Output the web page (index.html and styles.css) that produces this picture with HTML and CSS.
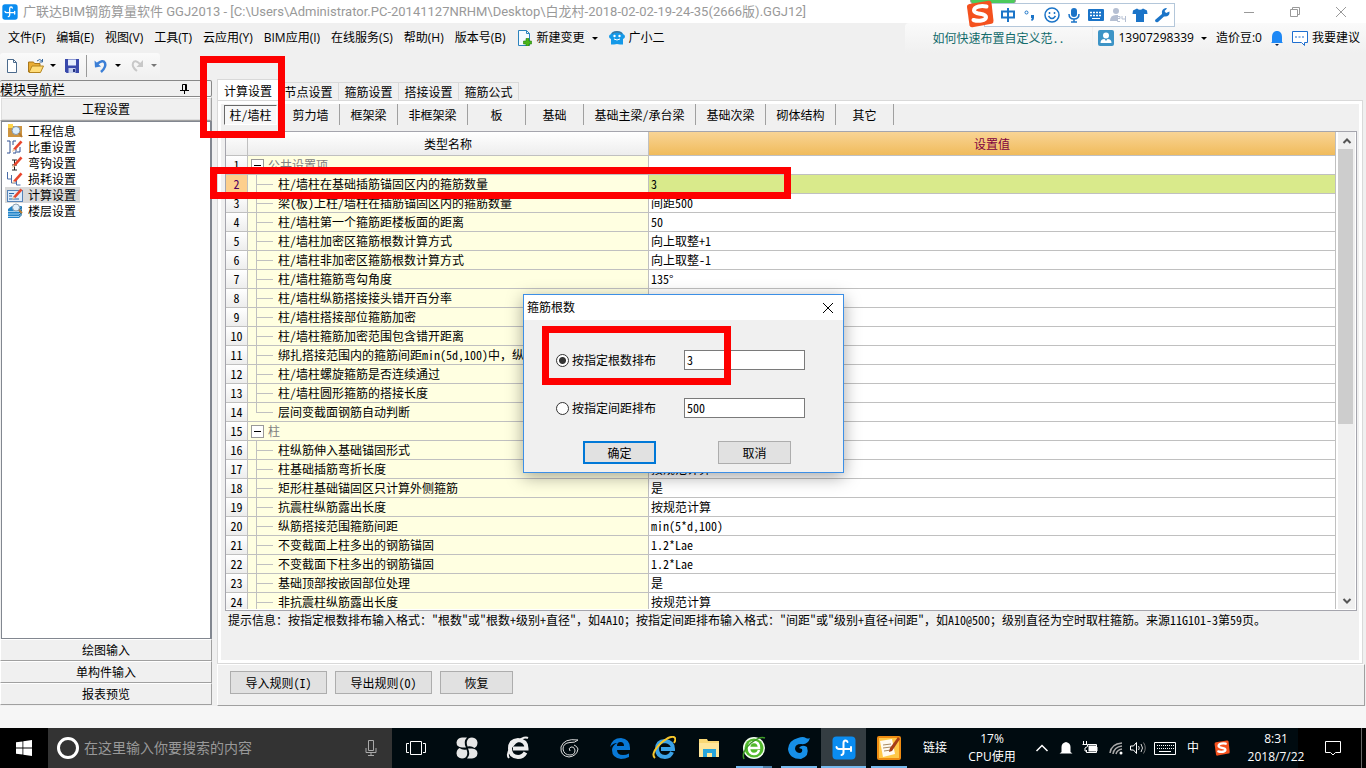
FILE: index.html
```html
<!DOCTYPE html>
<html lang="zh-CN">
<head>
<meta charset="utf-8">
<title>广联达BIM钢筋算量软件 GGJ2013</title>
<link rel="stylesheet" href="styles.css">
</head>
<body>
<svg class="defs" aria-hidden="true">
  <symbol id="i-app" viewBox="0 0 24 24"><rect x=".5" y=".5" width="23" height="23" rx="4" fill="#0a8cf0"/><path d="M15.500 6Q15 4.500 13.500 4.500 11.500 4.500 11.500 7V16.500q0 2-2 2.500M4.500 11q.5 2 2.500 2H19M19 11v4" fill="none" stroke="#fff" stroke-width="2" stroke-linecap="round"/></symbol>
  <symbol id="i-sogou" viewBox="0 0 28 28"><path d="M3.500 4 22.500.8q2.500-.3 3 2l2 18q.2 2.500-2 3L6.500 27.300q-2.500.4-3-2L1 7q-.2-2.500 2.500-3Z" fill="#f4511e"/><path d="M20.500 6.500C16 5.500 8 6 8 10.500c0 4.500 12 2 12 6.500 0 4-8 4.500-12.500 3" fill="none" stroke="#fff" stroke-width="4" stroke-linecap="round"/></symbol>
  <symbol id="i-pen" viewBox="0 0 16 16"><path d="M6 10 13.500 1.500l2 1.700L8.500 11Z" fill="#e8452c"/><path d="m6 10-1 3 3.500-2Z" fill="#e9c39b"/></symbol>
</svg>

<header class="titlebar">
  <svg class="s16"><use href="#i-app"/></svg>
  <h1 class="title">广联达BIM钢筋算量软件 GGJ2013 - [C:\Users\Administrator.PC-20141127NRHM\Desktop\白龙村-2018-02-02-19-24-35(2666版).GGJ12]</h1>
  <div class="window-buttons">
    <button aria-label="最小化"><svg class="s10" viewBox="0 0 10 10"><path d="M0 5.500h10"/></svg></button>
    <button aria-label="还原"><svg class="s10" viewBox="0 0 10 10"><path d="M.5 2.500h7v7h-7zM2.500 2.500v-2h7v7h-2"/></svg></button>
    <button aria-label="关闭"><svg class="s10" viewBox="0 0 10 10"><path d="m0 0 10 10M10 0 0 10"/></svg></button>
  </div>
</header>

<div class="menubar">
  <nav class="menu" aria-label="主菜单">
    <button>文件(F)</button><button>编辑(E)</button><button>视图(V)</button><button>工具(T)</button><button>云应用(Y)</button><button>BIM应用(I)</button><button>在线服务(S)</button><button>帮助(H)</button><button>版本号(B)</button>
    <button class="with-icon"><svg class="s16" viewBox="0 0 16 16"><path d="M1.500.5h8l3 3v12h-11z" fill="#f4faff" stroke="#2b83bd"/><path d="M9.500.5v3h3" fill="none" stroke="#2b83bd"/><path d="M9 8.500h3v2.500h2.500v3H12v2H9v-2H6.500v-3H9z" fill="#49b51b" stroke="#23810a" stroke-width=".6"/></svg>新建变更<i class="caret"></i></button>
    <button class="with-icon"><svg class="s16" viewBox="0 0 16 16"><path d="M8 1c3 0 5.500 1 6.500 3.500 2 .5 2 3.500-.5 4.500v5.500h-3L8 14l-3 .5H2V9C-.5 8-.5 5 1.500 4.500 2.500 2 5 1 8 1Z" fill="#1599e8"/><path d="M3 3.500Q8 0 13 3.500" fill="none" stroke="#567"/><circle cx="5.500" cy="6" r="1.200" fill="#fff"/><circle cx="10.500" cy="6" r="1.200" fill="#fff"/><path d="M5 9q3 2 6 0" fill="none" stroke="#fff"/></svg>广小二</button>
  </nav>
  <div class="promo"><a href="#help">如何快速布置自定义范..</a></div>
  <div class="account">
    <button class="with-icon phone"><svg class="s16" viewBox="0 0 16 16"><rect width="16" height="16" rx="2" fill="#3d94c6"/><circle cx="8" cy="5.500" r="3" fill="#fff"/><path d="M2.500 13q0-4 4-4L8 11l1.500-2q4 0 4 4Z" fill="#fff"/></svg>13907298339<i class="caret"></i></button>
    <span>造价豆:0</span>
    <button aria-label="通知"><svg class="bell" viewBox="0 0 12 16"><path d="M1 12V7q0-5 4-6h2q4 1 4 6v5l1 1H0z" fill="#1e88f5"/><path d="M4 14h4l-2 2z" fill="#124"/></svg></button>
    <button class="with-icon"><svg class="s16" viewBox="0 0 16 16"><path d="M.5 1.500h15v11h-3v3l-3-3h-9z" fill="#fff" stroke="#1e6fd0"/><path d="M3 7h2m1.500 0h2m1.500 0h2" stroke="#1e6fd0"/></svg>我要建议</button>
  </div>
</div>

<div class="toolbar">
  <div class="tools">
    <button aria-label="新建"><svg class="s16" viewBox="0 0 16 16"><path d="M3.500 1.500h6l3 3v10h-9z" fill="#fff" stroke="#4b6a8c"/><path d="M9.500 1.500v3h3" fill="none" stroke="#4b6a8c"/></svg></button>
    <button aria-label="打开"><svg class="s16" viewBox="0 0 16 16"><path d="M.5 14V4h5l1 1.500H12V8" fill="#e9ad35" stroke="#a9771b"/><path d="M1 14.500 4 8h11.500l-3 6.500z" fill="#ffdc78" stroke="#b4841f"/><path d="M9 3q3-3 5 0m.5-2v3h-3" fill="none" stroke="#35679f"/></svg><i class="caret"></i></button>
    <button aria-label="保存"><svg class="s16" viewBox="0 0 16 16"><path d="M1 1h14v14H2.500L1 13.500z" fill="#3949ab"/><path d="M4 1.500h8v6H4z" fill="#e6eefc"/><path d="M4.500 10h7v5h-7z" fill="#c7d1ee"/><path d="M9 11h2v3H9z" fill="#253380"/></svg></button>
    <i class="rule"></i>
    <button aria-label="撤销"><svg class="s16" viewBox="0 0 16 16"><path d="M4 6q6-5 8-1 1.500 4-4 9" fill="none" stroke="#3c7fd6" stroke-width="2.500"/><path d="M1.500 2.500 2 9.500l6-1z" fill="#3c7fd6"/></svg><i class="caret"></i></button>
    <button aria-label="重做"><svg class="s16" viewBox="0 0 16 16"><path d="M11 6Q6 1 4 5q-1.500 4 4 8" fill="none" stroke="#c8c8c8" stroke-width="2"/><path d="M14 2v7H7.500z" fill="#c8c8c8"/></svg><i class="caret dim"></i></button>
  </div>
</div>

<main class="workspace">
  <aside class="sidebar">
    <h2 class="dock-title">模块导航栏<svg class="pin" viewBox="0 0 9 10"><path d="M2.500 6V.5h4V6M0 6.500h9M4.500 7v3M5.500 1v5" fill="none" stroke="#000"/></svg></h2>
    <button class="group">工程设置</button>
    <ul class="tree">
      <li><button><svg class="s16" viewBox="0 0 16 16"><path d="M1 3h14v11H1z" fill="#cd9440"/><path d="M1 1h5v4H1z" fill="#ffd54a"/><circle cx="9" cy="7.500" r="4" fill="#dceefb" stroke="#8298b0"/><path d="m12 10 3 4" stroke="#b57a30" stroke-width="2"/></svg>工程信息</button></li>
      <li><button><svg class="s16" viewBox="0 0 16 16"><path d="M0 2h3v12H0M9 2H6v4M6 14h3v-4M13 8v5h-3" fill="none" stroke="#2f4f91"/><use href="#i-pen"/></svg>比重设置</button></li>
      <li><button><svg class="s16" viewBox="0 0 16 16"><path d="M5 5h5M7.500 5v10M5 15h5M5 10h5" stroke="#222"/><use href="#i-pen"/></svg>弯钩设置</button></li>
      <li><button><svg class="s16" viewBox="0 0 16 16"><path d="M.5 1v7h4V4v8h5V8v6h4" fill="none" stroke="#4a6ca8"/><use href="#i-pen"/></svg>损耗设置</button></li>
      <li><button class="selected"><svg class="s16" viewBox="0 0 16 16"><rect x=".5" y="3.500" width="15" height="11" fill="#ddecfc" stroke="#5583b8"/><path d="M2 6.500h5M2 9h3M2 12h10" stroke="#2b67a5"/><use href="#i-pen"/></svg>计算设置</button></li>
      <li><button><svg class="s16" viewBox="0 0 16 16"><path d="m1 6 4-3h10l-3 3v9H1z" fill="#2384c8"/><path d="m12 6 3-3v9l-3 3z" fill="#1b6ea8"/><path d="M1 8.500h11l3-3M1 11h11l3-3M1 13.500h11l3-3" fill="none" stroke="#d9efff" stroke-width=".7"/><circle cx="9" cy="4.500" r="3.500" fill="#e1f0fc" stroke="#889db0"/><path d="m12 7 3 3" stroke="#b57a30" stroke-width="2"/></svg>楼层设置</button></li>
    </ul>
    <button class="group low">绘图输入</button>
    <button class="group low">单构件输入</button>
    <button class="group low">报表预览</button>
  </aside>

  <section class="content">
    <div class="tabs"><button class="active">计算设置</button><button>节点设置</button><button>箍筋设置</button><button>搭接设置</button><button>箍筋公式</button></div>
    <div class="panel">
      <div class="subtabs"><button class="pressed"><span>柱/墙柱</span></button><button>剪力墙</button><button>框架梁</button><button class="w70">非框架梁</button><button>板</button><button>基础</button><button class="w112">基础主梁/承台梁</button><button class="w70">基础次梁</button><button class="w70">砌体结构</button><button>其它</button></div>
      <div class="grid-frame">
        <div class="grid-view">
          <table class="grid">
            <colgroup><col class="c-num"><col class="c-name"><col></colgroup>
            <thead><tr><th></th><th>类型名称</th><th class="value-head">设置值</th></tr></thead>
            <tbody>
              <tr class="parent"><th>1</th><td><i class="box"></i>公共设置项</td><td></td></tr>
              <tr class="current"><th>2</th><td>柱/墙柱在基础插筋锚固区内的箍筋数量</td><td>3</td></tr>
              <tr><th>3</th><td>梁(板)上柱/墙柱在插筋锚固区内的箍筋数量</td><td>间距500</td></tr>
              <tr><th>4</th><td>柱/墙柱第一个箍筋距楼板面的距离</td><td>50</td></tr>
              <tr><th>5</th><td>柱/墙柱加密区箍筋根数计算方式</td><td>向上取整+1</td></tr>
              <tr><th>6</th><td>柱/墙柱非加密区箍筋根数计算方式</td><td>向上取整-1</td></tr>
              <tr><th>7</th><td>柱/墙柱箍筋弯勾角度</td><td>135°</td></tr>
              <tr><th>8</th><td>柱/墙柱纵筋搭接接头错开百分率</td><td></td></tr>
              <tr><th>9</th><td>柱/墙柱搭接部位箍筋加密</td><td></td></tr>
              <tr><th>10</th><td>柱/墙柱箍筋加密范围包含错开距离</td><td></td></tr>
              <tr><th>11</th><td>绑扎搭接范围内的箍筋间距min(5d,100)中，纵</td><td></td></tr>
              <tr><th>12</th><td>柱/墙柱螺旋箍筋是否连续通过</td><td></td></tr>
              <tr><th>13</th><td>柱/墙柱圆形箍筋的搭接长度</td><td></td></tr>
              <tr class="last"><th>14</th><td>层间变截面钢筋自动判断</td><td></td></tr>
              <tr class="parent"><th>15</th><td><i class="box"></i>柱</td><td></td></tr>
              <tr><th>16</th><td>柱纵筋伸入基础锚固形式</td><td></td></tr>
              <tr><th>17</th><td>柱基础插筋弯折长度</td><td>按规范计算</td></tr>
              <tr><th>18</th><td>矩形柱基础锚固区只计算外侧箍筋</td><td>是</td></tr>
              <tr><th>19</th><td>抗震柱纵筋露出长度</td><td>按规范计算</td></tr>
              <tr><th>20</th><td>纵筋搭接范围箍筋间距</td><td>min(5*d,100)</td></tr>
              <tr><th>21</th><td>不变截面上柱多出的钢筋锚固</td><td>1.2*Lae</td></tr>
              <tr><th>22</th><td>不变截面下柱多出的钢筋锚固</td><td>1.2*Lae</td></tr>
              <tr><th>23</th><td>基础顶部按嵌固部位处理</td><td>是</td></tr>
              <tr><th>24</th><td>非抗震柱纵筋露出长度</td><td>按规范计算</td></tr>
            </tbody>
          </table>
        </div>
        <div class="scrollbar">
          <button aria-label="向上滚动"><svg class="s10" viewBox="0 0 10 10"><path d="m1.500 7 3.500-3.500L8.500 7"/></svg></button>
          <div class="track"><div class="thumb"></div></div>
          <button aria-label="向下滚动"><svg class="s10" viewBox="0 0 10 10"><path d="M1.500 3 5 6.500 8.500 3"/></svg></button>
        </div>
      </div>
      <p class="hint">提示信息：按指定根数排布输入格式："根数"或"根数+级别+直径"，如4A10；按指定间距排布输入格式："间距"或"级别+直径+间距"，如A10@500；级别直径为空时取柱箍筋。来源11G101-3第59页。</p>
    </div>
    <div class="actions"><button class="btn wide">导入规则(I)</button><button class="btn wide">导出规则(O)</button><button class="btn">恢复</button></div>
  </section>
</main>

<footer class="taskbar">
  <button class="start" aria-label="开始"><svg class="s16" viewBox="0 0 16 16"><path d="m0 2.300 6.500-.9v6.200H0zM7.300 1.300 16 0v7.600H7.300zM0 8.400h6.500v6.200L0 13.700zM7.300 8.400H16V16l-8.700-1.300z" fill="#fff"/></svg></button>
  <label class="search"><span class="ring"></span><input type="text" placeholder="在这里输入你要搜索的内容" aria-label="搜索"><svg class="mic" viewBox="0 0 12 18"><path d="M3.500 1.500h5v10h-5zM1 9v4.500h10V9M6 14v3M3 16.500h6" fill="none" stroke="#aaa"/></svg></label>
  <button class="taskview" aria-label="任务视图"><svg viewBox="0 0 20 16"><path d="M4.500 1.500h11v13h-11zM3 3.500H.5v9H3M17 3.500h2.500v9H17" fill="none" stroke="#fff"/></svg></button>
  <div class="pinned">
    <button aria-label="四叶草"><svg viewBox="0 0 24 24" fill="#e6e6e6"><path d="M11 11.500H7q-5.500-.5-5.500-5Q2 2 7 1.500h5q-4 4-1 10Z"/><path d="M12.500 10.500q-2-5 1-8Q15 1.500 17 1.500q5 .5 5.500 5 0 4-3 5.500-3-2.500-7-1.500Z"/><path d="M13 12.500h4q5.500.5 5.500 5-.5 4.500-5.500 5h-5q4-4 1-10Z"/><path d="M11.500 13.500q2 5-1 8-1.500 1-3.500 1-5-.5-5.500-5 0-4 3-5.500 3 2.500 7 1.500Z"/></svg></button>
    <button aria-label="浏览器"><svg viewBox="0 0 24 24"><path d="M19.500 16.500Q17 21 12 21q-8-.5-8-8.500T12 4q8.500.5 8.500 8.500H7" fill="none" stroke="#eee" stroke-width="4"/><path d="M3 22Q-1 17 9 7q9-7 13-5" fill="none" stroke="#eee" stroke-width="2"/></svg></button>
    <button aria-label="广联达"><svg viewBox="0 0 24 24"><path d="M21 4q-3 3-8 2.500-7 .5-7 6.500 1 6 7 6 5 0 5-5-1-4-4-3-3 1-1 4M21 4Q7 2 4 11q-1 9 8 10 8-1 9-8-1-3-4-4" fill="none" stroke="#ddd" stroke-width="1"/></svg></button>
    <button aria-label="Edge"><svg viewBox="0 0 24 24"><path d="M2 11Q4 2 13 2q9 1 9 10v2H9q0 5 6 5 3 0 6-1.500V21q-4 2-8 2-9-1-9-9 0-4 5-7-4 0-7 4Zm7-1h7q0-4-3.500-4T9 10Z" fill="#0878d6"/></svg></button>
  </div>
  <div class="running">
    <button aria-label="Internet Explorer"><svg viewBox="0 0 24 24"><path d="M20 16q-2 5-7 5-8-.5-8-8t8-8q8 1 8 8H9" fill="none" stroke="#3ba2e6" stroke-width="4"/><path d="M3 22Q-2 18 9 7 20-2 23 2q1 2-1 5" fill="none" stroke="#f6c62b" stroke-width="2"/></svg></button>
    <button aria-label="文件资源管理器"><svg viewBox="0 0 24 24"><path d="M2 3h8l1 2h11v16H2z" fill="#f9d774"/><path d="M2 7h20v14H2z" fill="#ffe69a"/><path d="M6 13h13v8h-4v-4h-5v4H6z" fill="#28a5db"/></svg></button>
    <button class="open stacked" aria-label="安全浏览器"><svg viewBox="0 0 24 24"><circle cx="12" cy="12" r="11" fill="#f4fff0"/><circle cx="12" cy="12" r="9.500" fill="#51b92b"/><path d="M17 14q-1 4-5 4-5 0-5-6t5-6q5 0 5 6H8" fill="none" stroke="#fff" stroke-width="2.500"/><path d="M2 23Q-1 16 9 7q9-7 14-5" fill="none" stroke="#3c9826" stroke-width="1.500"/></svg></button>
    <button class="open" aria-label="广联达G+"><svg viewBox="0 0 24 24"><path d="M23 2q-2 7-9 6-6 0-6 5 1 4 5 4 3-1 2-4l-3-1q3-4 8-1 3 9-6 12Q2 23 1 13 2 4 11 2q5-2 8 0 2 1 4 0Z" fill="#1690e8"/></svg></button>
    <button class="open active" aria-label="广联达BIM钢筋算量"><svg><use href="#i-app"/></svg></button>
    <button class="open" aria-label="笔记"><svg viewBox="0 0 24 24"><rect width="24" height="24" rx="2" fill="#ee8b12"/><path d="M2 2h20v20H2z" fill="#ffc848"/><path d="m3 5 12-2 3 15-12 3z" fill="#fffaf0"/><path d="m6 9 8-1M6 12l8-1M7 15l7-1" stroke="#a98b63"/><path d="m12 16 1-4L21 1l2 2-8 12z" fill="#a63d16"/></svg></button>
  </div>
  <div class="tray">
    <span class="t46">链接</span>
    <span class="t68"><b>17%</b><b>CPU使用</b></span>
    <span class="t32"><svg class="s14" viewBox="0 0 14 14"><path d="m1.500 10 5.500-5.500L12.500 10" fill="none" stroke="#fff" stroke-width="1.500"/></svg></span>
    <span class="t16"><svg class="s14" viewBox="0 0 14 14"><path d="M2.500 11V6q0-4 4.500-5 4.500 1 4.500 5v5l2 1.500H.5z" fill="#fff"/></svg></span>
    <span class="t32"><svg class="s16" viewBox="0 0 16 16"><path d="M6.500 5.500h8v6h-8z" fill="#fff"/><path d="M6 4.500h8.500v8H4.500V10M1.500 1v3M4.500 1v3M.5 4.500h5v2L3 8v3h1.500M16 7v4" fill="none" stroke="#fff"/></svg></span>
    <span class="t20"><svg class="s14" viewBox="0 0 14 14"><path d="M1 12Q2 3 13 2M4 13q1-7 9-8M7 13q1-4 6-5" fill="none" stroke="#aaa" stroke-width="1.500"/><circle cx="12" cy="12" r="1.500" fill="#fff"/></svg></span>
    <span class="t24"><svg class="s16" viewBox="0 0 16 16"><path d="M.5 6h3l3-3.500v11L3.500 10h-3z" fill="none" stroke="#fff"/><path d="M8.500 6q1.500 2 0 4M11 4q3 4 0 8" fill="none" stroke="#ddd"/><path d="M13.500 2.500q3.500 5.500 0 11" fill="none" stroke="#777"/></svg></span>
    <span class="t30"><svg class="keys" viewBox="0 0 22 13"><path d="M.5.500h21v12H.5z" fill="none" stroke="#fff"/><path d="M3 3.500h17M3 6.500h17" stroke="#fff" stroke-dasharray="1 1"/><path d="M5 9.500h12" stroke="#fff"/></svg></span>
    <span class="t26">中</span>
    <span class="t32"><svg class="s16"><use href="#i-sogou"/></svg></span>
    <span class="t76"><b>8:31</b><b>2018/7/22</b></span>
    <span class="t38"><svg class="s16" viewBox="0 0 16 16"><path d="M.5 1.500h15v11h-5L8 15l-2.500-2.500h-5z" fill="none" stroke="#fff"/></svg></span>
    <i class="desktop-edge"></i>
  </div>
</footer>

<div class="ime">
  <i class="ime-glow"></i>
  <svg class="ime-logo"><use href="#i-sogou"/></svg>
  <div class="ime-bar">
    <svg class="s16" viewBox="0 0 16 16"><path d="M2 4.500h12v6H2zM8 1v14" fill="none" stroke="#1b74c8" stroke-width="2"/></svg>
    <svg class="s16" viewBox="0 0 16 16"><circle cx="4.500" cy="5.500" r="1.500" fill="none" stroke="#1b74c8"/><path d="M9 8h3v3q0 2-2 3l-1-1 1-2H9z" fill="#1b74c8"/></svg>
    <svg class="s16" viewBox="0 0 16 16"><circle cx="8" cy="8" r="7" fill="none" stroke="#1b74c8" stroke-width="1.500"/><path d="M4.500 9q3.500 5 7 0M5.500 5v2M10.500 5v2" fill="none" stroke="#1b74c8" stroke-width="1.500"/></svg>
    <svg class="s16" viewBox="0 0 16 16"><rect x="5" y="1" width="6" height="9" rx="3" fill="#1b74c8"/><path d="M3 7q0 5 5 5t5-5M8 12v3M5 15h6" fill="none" stroke="#1b74c8" stroke-width="1.500"/></svg>
    <svg class="s16" viewBox="0 0 16 16"><rect y="2" width="16" height="12" rx="1" fill="#1b74c8"/><path d="M2 5.500h12M2 8.500h12" stroke="#fff" stroke-width="1.500" stroke-dasharray="2 1"/><path d="M4 11.500h8" stroke="#fff"/></svg>
    <svg class="s16" viewBox="0 0 16 16"><circle cx="6" cy="4" r="3" fill="#b5bfd2"/><path d="M0 14q0-6 6-6h2v6z" fill="#b5bfd2"/><path d="M7 9.500h3v2H7.500v3H10M12 9v3h3.500M15.500 9v6" fill="none" stroke="#b5bfd2"/></svg>
    <svg class="s16" viewBox="0 0 16 16"><path d="m5 1.500-4 2-.5 3.500H4v8h8V7h3.500L15 3.500l-4-2q-3 2.500-6 0Z" fill="#1b74c8"/></svg>
    <svg class="s16" viewBox="0 0 16 16"><path d="m1 13 7-6q-1-5 4-6l1 .500L10.500 4l1.500 2 3.500-1.500Q16 10 10 9.500L4 15q-3 1-3-2Z" fill="#1b74c8"/></svg>
  </div>
</div>

<form class="dialog" role="dialog" aria-labelledby="dialog-title">
  <div class="dialog-head"><h2 id="dialog-title">箍筋根数</h2><button type="button" aria-label="关闭"><svg class="s10" viewBox="0 0 10 10"><path d="m0 0 10 10M10 0 0 10" fill="none" stroke="#000"/></svg></button></div>
  <div class="dialog-body">
    <label class="choice"><input type="radio" name="mode" checked>按指定根数排布</label><input class="field" type="text" value="3" aria-label="根数">
    <label class="choice"><input type="radio" name="mode">按指定间距排布</label><input class="field" type="text" value="500" aria-label="间距">
  </div>
  <div class="dialog-actions"><button type="button" class="btn primary">确定</button><button type="button" class="btn">取消</button></div>
</form>

<div class="mark mark-tab"></div>
<div class="mark mark-row"></div>
<div class="mark mark-option"></div>
</body>
</html>
```
FILE: styles.css
```css
* { box-sizing: border-box; }
:root {
  --ui: "Open Sans", "Noto Sans CJK SC", sans-serif;
  --song: "Noto Sans Mono CJK SC", "Noto Sans CJK SC", sans-serif;
}
body {
  position: relative;
  display: flex;
  flex-direction: column;
  height: 100vh;
  margin: 0;
  overflow: hidden;
  background: #f0f0f0;
  color: #000;
  font: 12px/16px var(--song);
}
button { margin: 0; padding: 0; border: 0; background: none; color: inherit; font: inherit; }
h1, h2, p, ul { margin: 0; padding: 0; font: inherit; list-style: none; }
a { color: inherit; text-decoration: none; }
svg { display: block; flex: none; }
.defs { position: absolute; width: 0; height: 0; }
.s16 { width: 16px; height: 16px; }
.s14 { width: 14px; height: 14px; }
.s10 { width: 10px; height: 10px; }
.caret { flex: none; border: 3px solid transparent; border-top-color: #000; border-bottom: 0; }
.caret.dim { border-top-color: #777; }

/* Title bar */
.titlebar { display: flex; flex: none; align-items: center; gap: 5px; height: 23px; padding-left: 2px; background: #fff; }
.title { flex: 1; overflow: hidden; color: #999; font: 13px/20px Roboto, "Noto Sans CJK SC", sans-serif; white-space: nowrap; }
.window-buttons { display: flex; padding-right: 2px; }
.window-buttons button { display: grid; width: 46px; height: 20px; place-items: center; }
.window-buttons svg { fill: none; stroke: #999; }

/* Menu */
.menubar { display: flex; flex: none; height: 30px; font-family: var(--ui); white-space: nowrap; }
.menu { display: flex; flex: 1; align-items: center; gap: 11px; padding-left: 8px; }
.with-icon { display: flex; align-items: center; gap: 4px; }
.with-icon .caret { margin-left: 3px; }
.promo { display: flex; align-items: center; width: 188px; padding-left: 27px; border-right: 1px solid #f0f0f0; border-radius: 4px 0 0; background: linear-gradient(#fafafa, #f0f0f0); color: #126b6b; font-family: var(--song); }
.account { display: flex; align-items: center; gap: 9px; padding: 0 6px 0 5px; background: linear-gradient(#fafafa, #f0f0f0); }
.bell { width: 12px; height: 16px; }

.toolbar { flex: none; height: 26px; }
.tools { display: flex; align-items: center; gap: 8px; width: 160px; height: 25px; padding-left: 4px; border-radius: 3px; background: linear-gradient(#fafafa, #f0f0f0); }
.tools button { display: flex; align-items: center; gap: 6px; }
.rule { width: 1px; height: 22px; margin: 0 -2px; background: #999; }

/* Workspace */
.workspace { display: flex; flex: 1; gap: 5px; min-height: 0; }
.sidebar { display: flex; flex: none; flex-direction: column; width: 212px; padding: 1px 0; }
.dock-title { display: flex; align-items: center; justify-content: space-between; height: 17px; padding-right: 22px; border: 1px solid #888; border-left: 0; border-radius: 2px; font-size: 13px; line-height: 14px; }
.pin { width: 9px; height: 10px; }
.group { height: 24px; border: 1px solid; border-color: #fff #a0a0a0 #a0a0a0 #fff; outline: 1px solid #ddd; outline-offset: -2px; }
.group.low { height: 22px; outline: 0; }
.tree { flex: 1; padding: 1px 3px; margin-left: 1px; border: 1px solid #828790; border-right-width: 2px; background: #fff; }
.tree button { display: flex; align-items: center; gap: 5px; height: 16px; padding: 0 4px 0 2px; }
.tree .selected { background: #d9d9d9; }

.content { display: flex; flex: 1; flex-direction: column; min-width: 0; padding-right: 1px; }
.tabs { display: flex; flex: none; align-items: flex-end; height: 21px; }
.tabs button { width: 60px; height: 18px; padding-top: 1px; border: 1px solid #d9d9d9; border-width: 1px 1px 0 0; }
.tabs .active { width: 62px; height: 21px; border-left-width: 1px; background: #fff; }
.panel { display: flex; flex: 1; flex-direction: column; min-height: 0; margin-right: 2px; border: 1px solid #d9d9d9; box-shadow: inset 0 0 0 3px #fff; padding: 3px 4px; }
.subtabs { display: flex; flex: none; height: 27px; padding: 0 0 6px 2px; }
.subtabs button { width: 58px; height: 21px; border-right: 1px solid #a0a0a0; }
.subtabs .w70 { width: 70px; }
.subtabs .w112 { width: 112px; }
.subtabs .pressed span { display: block; width: 53px; height: 20px; padding-top: 1px; border: 1px solid; border-color: #696969 #fff #fff #696969; background: #f8f8f8; }
.grid-frame { display: flex; flex: 1; gap: 2px; min-height: 0; margin: 0 1px 0 3px; padding: 0 1px 1px 0; border: 1px solid #a5a5ad; background: #fff; }
.grid-view { flex: 1; min-width: 0; overflow: hidden; }
.grid { width: 100%; border-spacing: 0; table-layout: fixed; }
.c-num { width: 22px; }
.c-name { width: 401px; }
.grid th, .grid td { height: 19px; padding: 0; border: 1px solid #c0c0c0; border-width: 0 1px 1px 0; font-weight: 400; line-height: 14px; white-space: nowrap; overflow: hidden; }
.grid thead th { height: 24px; background: linear-gradient(#fff, #ededed); }
.grid thead .value-head { background: linear-gradient(#f9d495, #f0bb5b); color: #800040; }
.grid tbody th { background: linear-gradient(#fff, #ededed); }
.grid td { padding-left: 2px; background: #fff; }
.grid td:nth-child(2) { padding-left: 30px; background: linear-gradient(#c0c0c0, #c0c0c0) 8px 0 / 1px 100% no-repeat, linear-gradient(#c0c0c0, #c0c0c0) 8px 9px / 17px 1px no-repeat, #ffffe1; }
.grid .last td:nth-child(2) { background-size: 1px 10px, 17px 1px, auto; }
.grid .parent td:nth-child(2) { padding-left: 3px; background: #ffffe1; color: #808080; }
.box { display: inline-block; width: 13px; height: 13px; margin-right: 4px; border: 1px solid #999; background: linear-gradient(#000, #000) center / 7px 1px no-repeat #fff; vertical-align: -2px; }
.grid .current th { background: #fdcf8c; color: #500060; }
.grid .current td:last-child { background: #d9ea8b; }
.scrollbar { display: flex; flex-direction: column; width: 17px; background: #f0f0f0; }
.scrollbar button { display: grid; height: 17px; place-items: center; }
.scrollbar path { fill: none; stroke: #555; stroke-width: 2; }
.track { flex: 1; }
.thumb { width: 15px; height: 62%; background: #cdcdcd; }
.hint { flex: none; height: 49px; padding: 1px 0 0 6px; white-space: nowrap; overflow: hidden; }
.actions { display: flex; flex: none; align-items: flex-start; gap: 8px; height: 42px; padding: 6px 12px; border: 1px solid; border-color: #fff #a0a0a0 #a0a0a0 #fff; }
.btn { width: 73px; height: 23px; border: 1px solid #adadad; background: #e1e1e1; }
.btn.wide { width: 97px; }
.btn.primary { border: 2px solid #0078d7; }

/* Taskbar */
.taskbar { display: flex; flex: none; height: 62px; border-top: 22px solid #f6f6f6; background: linear-gradient(90deg, #000b10 95%, #000 95%); color: #fff; font-family: var(--ui); }
.start { display: grid; width: 48px; place-items: center; background: #000; }
.search { display: flex; align-items: center; gap: 5px; width: 344px; padding: 0 15px 0 9px; background: #333; }
.ring { width: 22px; height: 22px; border: 3px solid #fff; border-radius: 50%; }
.search input { flex: 1; min-width: 0; padding: 0; border: 0; background: none; color: #fff; font: 14px/20px var(--ui); }
.search input::placeholder { color: #999; opacity: 1; }
.mic { width: 12px; height: 18px; }
.taskview { display: grid; width: 48px; place-items: center; }
.taskview svg { width: 20px; height: 16px; }
.pinned { display: flex; gap: 27px; padding: 0 9px 0 15px; }
.pinned svg, .running svg { width: 24px; height: 24px; }
.running { display: flex; }
.running button { display: grid; width: 45px; place-items: center; }
.running .open { background: linear-gradient(#76b9ed, #76b9ed) center bottom / 36px 2px no-repeat; }
.running .stacked { background: linear-gradient(90deg, #76b9ed 27px, #4d7fa8 27px) center bottom / 36px 2px no-repeat; }
.running .active { background: linear-gradient(#76b9ed, #76b9ed) bottom / 100% 2px no-repeat #343d42; }
.tray { display: flex; margin-left: auto; padding-right: 4px; }
.tray span { display: grid; place-items: center; place-content: center; }
.tray b { font-weight: 400; line-height: 18px; }
.t16 { width: 16px; } .t20 { width: 20px; } .t24 { width: 24px; } .t26 { width: 26px; } .t30 { width: 30px; }
.t32 { width: 32px; } .t38 { width: 38px; } .t46 { width: 46px; } .t68 { width: 68px; } .t76 { width: 76px; }
.keys { width: 22px; height: 13px; }
.desktop-edge { width: 1px; margin-left: 9px; background: #666; }

/* Floating input-method bar */
.ime { position: absolute; top: 0; right: 191px; display: flex; align-items: flex-start; }
.ime-glow { position: absolute; top: 0; left: 4px; width: 46px; height: 5px; border: 1px solid #999; border-top: 0; border-radius: 0 0 8px 8px; background: #4cca5b; }
.ime-logo { position: relative; z-index: 1; width: 28px; height: 28px; margin-right: -10px; }
.ime-bar { position: relative; display: flex; align-items: center; gap: 6px; height: 24px; margin-top: 3px; padding: 0 4px 0 15px; border: 1px solid #b4c7da; background: #fff; }

/* Dialog */
.dialog { position: absolute; top: 294px; left: 523px; width: 321px; border: 1px solid #3c8fe6; background: #f0f0f0; box-shadow: 0 4px 16px rgba(0, 0, 0, .35); }
.dialog-head { display: flex; align-items: center; justify-content: space-between; height: 25px; padding: 0 10px 0 3px; background: #fff; font-family: var(--ui); }
.dialog-body { display: grid; grid-template-columns: 128px 121px; row-gap: 28px; align-items: center; padding: 30px 0 0 32px; }
.choice { display: flex; align-items: center; gap: 3px; }
.choice input { appearance: none; width: 13px; height: 13px; margin: 0; border: 1px solid #333; border-radius: 50%; background: #fff; }
.choice input:checked { background: radial-gradient(circle, #333 3px, #fff 4px); }
.field { height: 20px; min-width: 0; padding: 0 2px 2px; border: 1px solid #7a7a7a; background: #fff; font: inherit; }
.dialog-actions { display: flex; gap: 62px; padding: 23px 0 8px 59px; }

/* Highlight frames over the window */
.mark { position: absolute; border: 7px solid #fe0000; pointer-events: none; }
.mark-tab { top: 56px; left: 200px; width: 85px; height: 82px; }
.mark-row { top: 167px; left: 210px; width: 581px; height: 32px; }
.mark-option { top: 326px; left: 542px; width: 189px; height: 59px; }
```
